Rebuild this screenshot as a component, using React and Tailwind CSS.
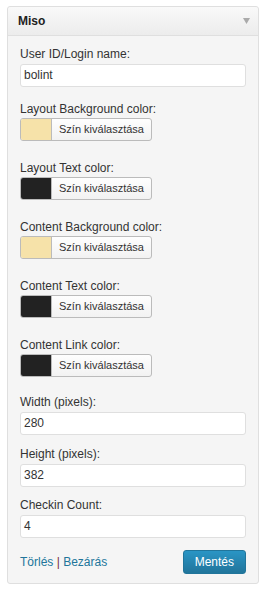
import React from "react";

const Label = ({ children }) => (
  <div className="text-[12px] leading-[15px] text-[#333]">{children}</div>
);

const TextField = ({ value }) => (
  <div className="mt-[2px] h-[23px] w-[226px] rounded-[3px] border border-[#dfdfdf] bg-white px-[3px] text-[12px] leading-[21px] text-[#333]">
    {value}
  </div>
);

const ColorPicker = ({ color }) => (
  <div className="mt-[1px] flex h-[23px] w-[132px] overflow-hidden rounded-[3px] border border-[#bbb] bg-gradient-to-b from-[#fefefe] to-[#f2f2f2]">
    <div className="w-[31px] border-r border-[#bbb]" style={{ backgroundColor: color }} />
    <div className="flex-1 text-center text-[11px] leading-[21px] text-[#333]">Szín kiválasztása</div>
  </div>
);

const App = () => {
  const colors = [
    { label: "Layout Background color:", color: "#f6e2a9" },
    { label: "Layout Text color:", color: "#222222" },
    { label: "Content Background color:", color: "#f6e2a9" },
    { label: "Content Text color:", color: "#222222" },
    { label: "Content Link color:", color: "#222222" },
  ];
  const fields = [
    { label: "Width (pixels):", value: "280", mt: "mt-[18px]" },
    { label: "Height (pixels):", value: "382", mt: "mt-[12px]" },
    { label: "Checkin Count:", value: "4", mt: "mt-[11px]" },
  ];

  return (
    <div className="min-h-screen bg-white pt-[6px] pl-[7px]" style={{ fontFamily: '"Liberation Sans", Arial, sans-serif' }}>
      <div className="w-[252px] rounded-[3px] border border-[#dfdfdf] bg-[#f5f5f5]">
        {/* header */}
        <div className="flex h-[29px] items-center justify-between rounded-t-[3px] border-b border-[#dfdfdf] bg-gradient-to-b from-[#f9f9f9] to-[#ececec] pl-[10px] pr-[8px]">
          <span className="text-[12px] font-bold text-[#222]">Miso</span>
          <svg width="7" height="6" viewBox="0 0 7 6">
            <path d="M0 0 H7 L3.5 6 Z" fill="#aaa" />
          </svg>
        </div>

        <div className="px-[12px] pt-[11px] pb-[9px]">
          <Label>User ID/Login name:</Label>
          <TextField value="bolint" />

          {colors.map((c, i) => (
            <div key={c.label} className={i === 0 ? "mt-[15px]" : "mt-[20px]"}>
              <Label>{c.label}</Label>
              <ColorPicker color={c.color} />
            </div>
          ))}

          {fields.map((f) => (
            <div key={f.label} className={f.mt}>
              <Label>{f.label}</Label>
              <TextField value={f.value} />
            </div>
          ))}

          <div className="mt-[12px] flex items-center justify-between">
            <div className="text-[12px] text-[#21759b]">
              Törlés <span className="text-[#7a2e38]">|</span> Bezárás
            </div>
            <button className="h-[24px] rounded-[3px] border border-[#21759b] bg-gradient-to-b from-[#2a95c5] to-[#21759b] px-[11px] text-[12px] text-white">
              Mentés
            </button>
          </div>
        </div>
      </div>
    </div>
  );
};

export default App;
